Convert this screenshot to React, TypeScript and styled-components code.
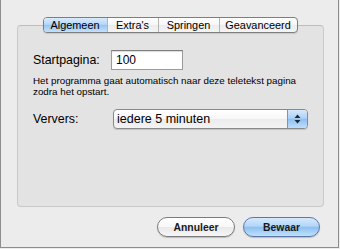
import React from 'react'
import styled, { createGlobalStyle } from 'styled-components'

const GlobalStyle = createGlobalStyle`
    html, body {
        margin: 0;
        padding: 0;
        background: #ececec;
    }
    body {
        font-family: "Liberation Sans", Arial, sans-serif;
        color: #000;
    }
`

const Window = styled.div`
    width: 339px;
    height: 248px;
    box-sizing: border-box;
    background: #ececec;
    border: 1px solid #8d8d8d;
    border-top: none;
    display: flex;
    flex-direction: column;
    padding-top: 17px;
`

const TabView = styled.section`
    display: flex;
    flex-direction: column;
    align-items: center;
    margin: 0 14px 0 16px;
`

const TabBar = styled.div`
    position: relative;
    z-index: 1;
    display: flex;
    height: 16px;
    box-sizing: border-box;
    border: 1px solid #7e7e7e;
    border-radius: 4px;
    overflow: hidden;
    background: linear-gradient(#ffffff, #f6f6f6 50%, #ececec 51%, #f4f4f4);
    box-shadow: 0 1px 1px rgba(0, 0, 0, 0.12);
    margin-right: 1px;
`

const Tab = styled.div<{ $w: number; $active?: boolean }>`
    width: ${p => p.$w}px;
    display: flex;
    align-items: center;
    justify-content: center;
    font-size: 10.9px;
    line-height: 14px;
    border-left: 1px solid #b4b4b4;
    &:first-child {
        border-left: none;
    }
    background: ${p => p.$active
        ? 'linear-gradient(#d9eafc, #b7d8f9 45%, #98c5f3 52%, #c4e1fb)'
        : 'transparent'};
`

const Panel = styled.div`
    align-self: stretch;
    height: 182px;
    box-sizing: border-box;
    margin-top: -8px;
    background: #e3e3e3;
    border: 1px solid #c9c9c9;
    border-top-color: #bdbdbd;
    border-radius: 4px;
    padding: 24px 15px 0 15px;
`

const FieldRow = styled.div<{ $labelWidth: number }>`
    display: flex;
    align-items: center;

    & > label {
        width: ${p => p.$labelWidth}px;
        flex: none;
        font-size: 12.4px;
    }
`

const TextInput = styled.input`
    width: 72px;
    height: 20px;
    box-sizing: border-box;
    border: 1px solid #9b9b9b;
    border-top-color: #7f7f7f;
    background: #fff;
    box-shadow: inset 0 1px 1px rgba(0, 0, 0, 0.15);
    padding: 0 0 0 4px;
    margin: 0;
    font-family: "Liberation Sans", Arial, sans-serif;
    font-size: 12px;
    outline: none;
`

const Hint = styled.p`
    margin: 5px 0 12px 0;
    font-size: 9.8px;
    line-height: 11px;
    width: 280px;
`

const PopUp = styled.div`
    width: 198px;
    height: 20px;
    box-sizing: border-box;
    display: flex;
    border: 1px solid #8a8a8a;
    border-radius: 4px;
    overflow: hidden;
    background: linear-gradient(#ffffff, #f7f7f7 50%, #ececec 51%, #f3f3f3);
    box-shadow: 0 1px 1px rgba(0, 0, 0, 0.15);
`

const PopUpValue = styled.span`
    flex: 1;
    font-size: 12.5px;
    line-height: 18px;
    padding-left: 3px;
`

const Stepper = styled.span`
    width: 19px;
    border-left: 1px solid #7f93b6;
    background: linear-gradient(#d6e8fb, #aed2f7 45%, #8fc0f1 52%, #c0defa);
    display: flex;
    align-items: center;
    justify-content: center;
`

const ButtonBar = styled.div`
    display: flex;
    justify-content: flex-end;
    gap: 8px;
    padding: 10px 18px 0 0;
`

const Button = styled.button<{ $w: number; $default?: boolean }>`
    width: ${p => p.$w}px;
    height: 20px;
    box-sizing: border-box;
    margin: 0;
    padding: 0;
    border-radius: 10px;
    border: 1px solid ${p => (p.$default ? '#5d78a8' : '#7b7b7b')};
    background: ${p => p.$default
        ? 'linear-gradient(#d5e9fd, #b3d6f9 45%, #8ec0f2 52%, #bfe0fc)'
        : 'linear-gradient(#ffffff, #f7f7f7 50%, #e9e9e9 51%, #f6f6f6)'};
    box-shadow: 0 1px 1px rgba(0, 0, 0, 0.2);
    font-family: "Liberation Sans", Arial, sans-serif;
    font-weight: bold;
    font-size: 10.4px;
    color: #1a1a1a;
`

const UpDown = () => (
    <svg width="7" height="10" viewBox="0 0 7 10">
        <path d="M3.5 0.5 L6.5 4 L0.5 4 Z" fill="#1d2a3a" />
        <path d="M3.5 9.5 L6.5 6 L0.5 6 Z" fill="#1d2a3a" />
    </svg>
)

const tabs = [
    { name: 'Algemeen', w: 63 },
    { name: "Extra's", w: 50 },
    { name: 'Springen', w: 60 },
    { name: 'Geavanceerd', w: 77 },
]

export default function App() {
    return (
        <>
            <GlobalStyle />
            <Window>
                <TabView>
                    <TabBar>
                        {tabs.map((t, i) => (
                            <Tab key={t.name} $w={t.w} $active={i === 0}>{t.name}</Tab>
                        ))}
                    </TabBar>
                    <Panel>
                        <FieldRow $labelWidth={78}>
                            <label>Startpagina:</label>
                            <TextInput defaultValue="100" />
                        </FieldRow>
                        <Hint>
                            Het programma gaat automatisch naar deze teletekst pagina zodra het opstart.
                        </Hint>
                        <FieldRow $labelWidth={80}>
                            <label>Ververs:</label>
                            <PopUp>
                                <PopUpValue>iedere 5 minuten</PopUpValue>
                                <Stepper><UpDown /></Stepper>
                            </PopUp>
                        </FieldRow>
                    </Panel>
                </TabView>
                <ButtonBar>
                    <Button $w={78}>Annuleer</Button>
                    <Button $w={77} $default>Bewaar</Button>
                </ButtonBar>
            </Window>
        </>
    )
}
